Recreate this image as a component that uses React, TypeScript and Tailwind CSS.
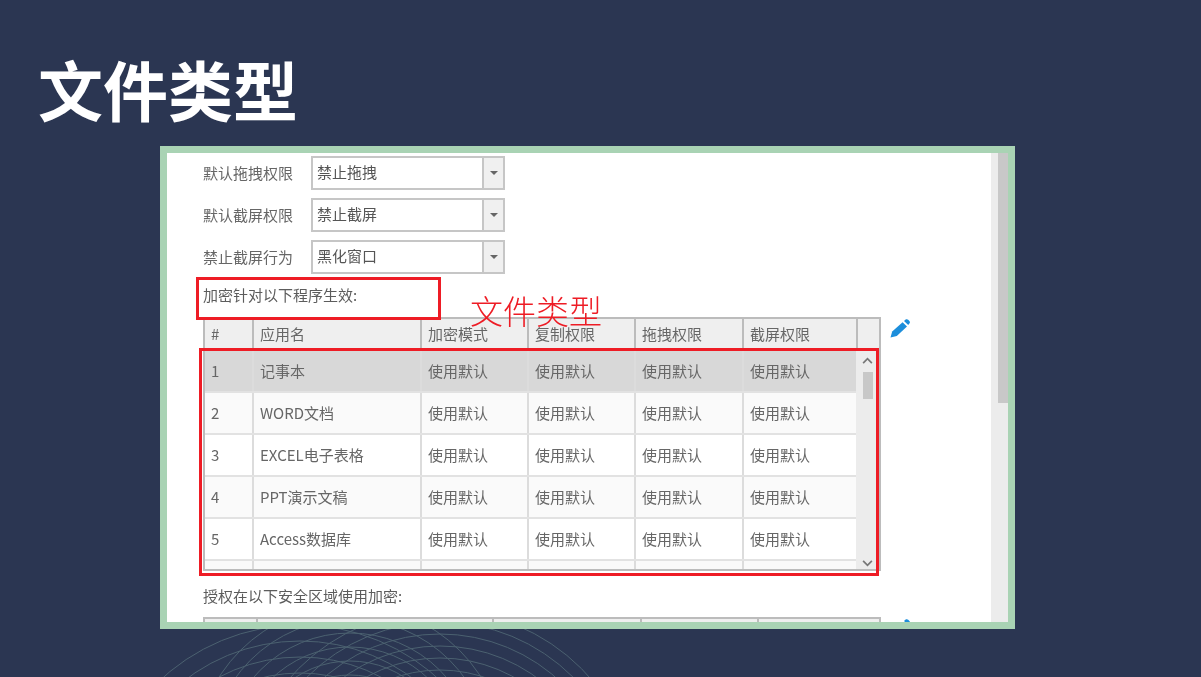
import React from 'react';

const font = "font-['Microsoft_YaHei','Noto_Sans_CJK_SC','Noto_Sans',sans-serif]";

const selects = [
  { label: '默认拖拽权限', value: '禁止拖拽' },
  { label: '默认截屏权限', value: '禁止截屏' },
  { label: '禁止截屏行为', value: '黑化窗口' },
];

const apps = [
  { id: 1, name: '记事本' },
  { id: 2, name: 'WORD文档' },
  { id: 3, name: 'EXCEL电子表格' },
  { id: 4, name: 'PPT演示文稿' },
  { id: 5, name: 'Access数据库' },
];

const Cell = ({ children }: { children?: React.ReactNode }) => (
  <div className="flex items-center pl-[6px] border-r-2 border-[#dcdcdc] last:border-r-0 overflow-hidden whitespace-nowrap">
    {children}
  </div>
);

const Pencil = () => (
  <svg viewBox="0 0 21 19" className="w-[21px] h-[19px]" fill="#1c8edb">
    <path d="M0.5 18.5 L2.2 12.6 L12.6 3.2 L17 7.6 L6.8 17 Z" />
    <path d="M14 2 L15.6 0.6 C16.4 0 17.4 0 18.2 0.7 L19.4 1.9 C20.2 2.8 20.1 3.8 19.4 4.6 L18.2 6 Z" />
  </svg>
);

const App: React.FC = () => {
  return (
    <div className={`relative w-[1201px] h-[677px] overflow-hidden bg-[#2b3652] ${font}`}>
      <svg viewBox="0 0 1201 677" className="absolute inset-0 w-full h-full" fill="none" stroke="#4b6170" strokeWidth="1">
        {[0, 14, 28, 42, 56, 70, 84, 98, 112].map((d) => (
          <circle key={`a${d}`} cx="350" cy="760" r={155 - d} />
        ))}
        {[0, 12, 24, 36, 48, 60, 72, 84, 96, 108, 120, 132].map((d) => (
          <circle key={`b${d}`} cx="440" cy="810" r={200 - d} />
        ))}
        {[0, 16, 32, 48, 64].map((d) => (
          <circle key={`c${d}`} cx="300" cy="830" r={205 - d} />
        ))}
      </svg>

      <h1 className="relative pl-[38px] pt-[43px] h-[146px] text-[65px] leading-[90px] font-bold text-white">文件类型</h1>

      <div className="relative ml-[160px] w-[855px] h-[483px] border-[7px] border-[#a9d3b4] bg-white flex overflow-hidden blur-[0.4px]">
        <div className="flex-1 min-w-0 pl-[36px] pt-[3px] text-[15px] text-[#666666]">
          <div className="flex flex-col gap-[8px]">
            {selects.map((s) => (
              <div key={s.value} className="flex items-center h-[34px]">
                <span className="w-[108px] whitespace-nowrap">{s.label}</span>
                <div className="flex w-[194px] h-[34px] border-2 border-[#c6c6c6]">
                  <span className="flex-1 pl-[4px] leading-[28px] text-[#555555]">{s.value}</span>
                  <div className="flex w-[21px] items-center justify-center bg-[#f0f0f0] border-l-2 border-[#c6c6c6]">
                    <div className="w-0 h-0 border-x-[4px] border-t-[4px] border-x-transparent border-t-[#666666]" />
                  </div>
                </div>
              </div>
            ))}
          </div>

          <div className="h-[43px] pt-[9px] leading-[24px] text-[#5c5c5c]">加密针对以下程序生效:</div>

          <div className="flex items-start">
            <div className="w-[678px] h-[254px] border-2 border-t-2 border-[#bcbcbc] overflow-hidden">
              <div className="grid grid-cols-[49px_168px_107px_107px_108px_114px_1fr] h-[32px] bg-[#efefef] border-b-2 border-[#b8b8b8]">
                {['#', '应用名', '加密模式', '复制权限', '拖拽权限', '截屏权限', ''].map((h) => (
                  <div key={h} className="flex items-center pl-[6px] border-r-2 border-[#bcbcbc] last:border-r-0">{h}</div>
                ))}
              </div>
              <div className="flex">
                <div className="flex-1 min-w-0">
                  {apps.map((a, i) => (
                    <div
                      key={a.id}
                      className={`grid grid-cols-[49px_168px_107px_107px_108px_114px] h-[42px] border-b-2 border-[#e2e2e2] ${
                        i === 0 ? 'bg-[#d8d8d8]' : i % 2 === 1 ? 'bg-[#fafafa]' : 'bg-white'
                      }`}
                    >
                      <Cell>{a.id}</Cell>
                      <Cell>{a.name}</Cell>
                      <Cell>使用默认</Cell>
                      <Cell>使用默认</Cell>
                      <Cell>使用默认</Cell>
                      <Cell>使用默认</Cell>
                    </div>
                  ))}
                  <div className="grid grid-cols-[49px_168px_107px_107px_108px_114px] h-[12px] bg-[#fafafa]">
                    <Cell />
                    <Cell />
                    <Cell />
                    <Cell />
                    <Cell />
                    <Cell />
                  </div>
                </div>
                <div className="relative w-[23px] h-[222px] bg-[#ececec] flex flex-col items-center">
                  <svg viewBox="0 0 12 8" className="mt-[6px] w-[11px] h-[7px]" fill="none" stroke="#777777" strokeWidth="2"><path d="M1 7 L6 2 L11 7" /></svg>
                  <div className="mt-[8px] w-[10px] h-[27px] bg-[#c8c8c8]" />
                  <svg viewBox="0 0 12 8" className="mt-auto mb-[6px] w-[11px] h-[7px]" fill="none" stroke="#777777" strokeWidth="2"><path d="M1 1 L6 6 L11 1" /></svg>
                </div>
              </div>
            </div>
            <div className="ml-[9px] mt-[2px]"><Pencil /></div>
          </div>

          <div className="h-[46px] pt-[13px] leading-[24px] text-[#5c5c5c]">授权在以下安全区域使用加密:</div>

          <div className="flex items-start">
            <div className="grid grid-cols-[53px_236px_148px_117px_1fr] w-[678px] h-[30px] bg-[#efefef] border-2 border-[#bcbcbc]">
              <div className="border-r-2 border-[#bcbcbc]" />
              <div className="border-r-2 border-[#bcbcbc]" />
              <div className="border-r-2 border-[#bcbcbc]" />
              <div className="border-r-2 border-[#bcbcbc]" />
              <div />
            </div>
            <div className="ml-[9px] mt-[2px]"><Pencil /></div>
          </div>
        </div>

        <div className="w-[17px] bg-[#ececec] flex justify-end shrink-0">
          <div className="w-[10px] h-[250px] bg-[#c8c8c8]" />
        </div>

        <div className="absolute left-[29px] top-[124px] w-[245px] h-[43px] border-[3px] border-[#ee1c25]" />
        <div className="absolute left-[32px] top-[195px] w-[680px] h-[228px] border-[3px] border-[#ee1c25]" />
        <div className="absolute left-[303px] top-[135px] text-[33px] leading-[44px] font-light text-[#ee1c25] whitespace-nowrap">文件类型</div>
      </div>
    </div>
  );
};

export default App;
